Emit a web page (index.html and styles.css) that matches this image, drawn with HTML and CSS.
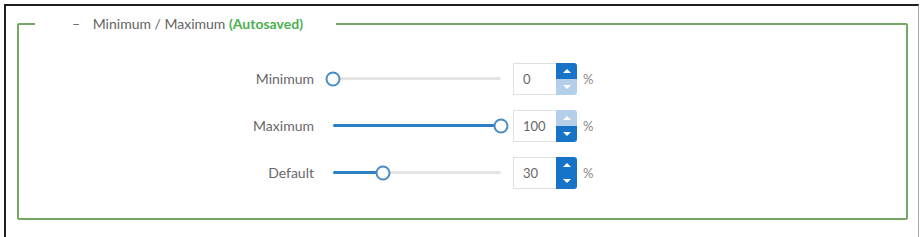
FILE: index.html
```html
<html lang="en">
    <head>
        <meta charset="UTF-8" />
        <meta name="viewport" content="width=device-width, initial-scale=1.0" />
        <title>Minimum / Maximum</title>
        <link rel="stylesheet" href="styles.css">
    </head>
    <body>
        <div class="frame">
            <fieldset class="group">
                <legend>
                    <span class="toggle">&ndash;</span>
                    Minimum / Maximum
                    <span class="saved">(Autosaved)</span>
                </legend>

                <div class="row">
                    <label>Minimum</label>
                    <div class="slider">
                        <div class="fill" style="width: 0%"></div>
                        <div class="knob" style="left: 0%"></div>
                    </div>
                    <div class="spin-input">
                        <input type="text" value="0" />
                        <div class="spinner">
                            <span class="up"></span>
                            <span class="down off"></span>
                        </div>
                    </div>
                    <span class="unit">%</span>
                </div>

                <div class="row">
                    <label>Maximum</label>
                    <div class="slider">
                        <div class="fill" style="width: 100%"></div>
                        <div class="knob" style="left: 100%"></div>
                    </div>
                    <div class="spin-input">
                        <input type="text" value="100" />
                        <div class="spinner">
                            <span class="up off"></span>
                            <span class="down"></span>
                        </div>
                    </div>
                    <span class="unit">%</span>
                </div>

                <div class="row">
                    <label>Default</label>
                    <div class="slider">
                        <div class="fill" style="width: 30%"></div>
                        <div class="knob" style="left: 30%"></div>
                    </div>
                    <div class="spin-input">
                        <input type="text" value="30" />
                        <div class="spinner">
                            <span class="up"></span>
                            <span class="down"></span>
                        </div>
                    </div>
                    <span class="unit">%</span>
                </div>
            </fieldset>
        </div>
    </body>
</html>
```

FILE: styles.css
```css
* {
    margin: 0;
    padding: 0;
    box-sizing: border-box;
}

body {
    background-color: #ffffff;
    font-family: Lato, "Open Sans", sans-serif;
    font-size: 14px;
    color: #666666;
    overflow: hidden;
}

.frame {
    margin: 4px 4px 0 4px;
    height: 300px;
    border-top: 2px solid #1e1e1e;
    border-left: 2px solid #1e1e1e;
    border-right: 1px solid #a8a8a8;
    padding: 9px 10px 0 11px;
}

.group {
    border: 2px solid #74a864;
    border-radius: 2px;
    padding: 22px 16px 22px 16px;
}

.group legend {
    height: 18px;
    line-height: 18px;
    padding: 0 33px 0 37px;
    color: #636363;
    font-size: 14px;
}

.group legend .toggle {
    margin-right: 9px;
    color: #666666;
}

.group legend .saved {
    color: #4caf50;
    font-weight: 700;
}

.row {
    display: flex;
    align-items: center;
    height: 47px;
}

.row label {
    width: 279px;
    text-align: right;
    color: #676767;
}

.slider {
    position: relative;
    width: 168px;
    height: 3px;
    margin: 0 12px 0 19px;
    background-color: #e4e4e4;
    border-radius: 2px;
}

.slider .fill {
    height: 100%;
    background-color: #2f7fc6;
    border-radius: 2px;
}

.slider .knob {
    position: absolute;
    top: 50%;
    width: 15px;
    height: 15px;
    border: 2px solid #4a8cc4;
    border-radius: 50%;
    background-color: #ffffff;
    transform: translate(-50%, -50%);
}

.spin-input {
    display: flex;
    height: 32px;
}

.spin-input input {
    width: 43px;
    height: 100%;
    padding-left: 9px;
    border: 1px solid #e0e0e0;
    border-right: 0;
    font-family: Lato, "Open Sans", sans-serif;
    font-size: 13px;
    color: #666666;
    outline: 0;
}

.spinner {
    display: flex;
    flex-direction: column;
    width: 21px;
    border-radius: 0 3px 3px 0;
    overflow: hidden;
}

.spinner span {
    position: relative;
    flex: 1;
    background-color: #1673c8;
}

.spinner span.off {
    background-color: #b3cfea;
}

.spinner span::after {
    content: "";
    position: absolute;
    left: 50%;
    top: 50%;
    border-left: 4px solid transparent;
    border-right: 4px solid transparent;
    transform: translate(-50%, -50%);
}

.spinner .up::after {
    border-bottom: 4px solid #ffffff;
}

.spinner .down::after {
    border-top: 4px solid #ffffff;
}

.unit {
    margin-left: 6px;
    color: #888888;
    font-size: 13px;
}
```
